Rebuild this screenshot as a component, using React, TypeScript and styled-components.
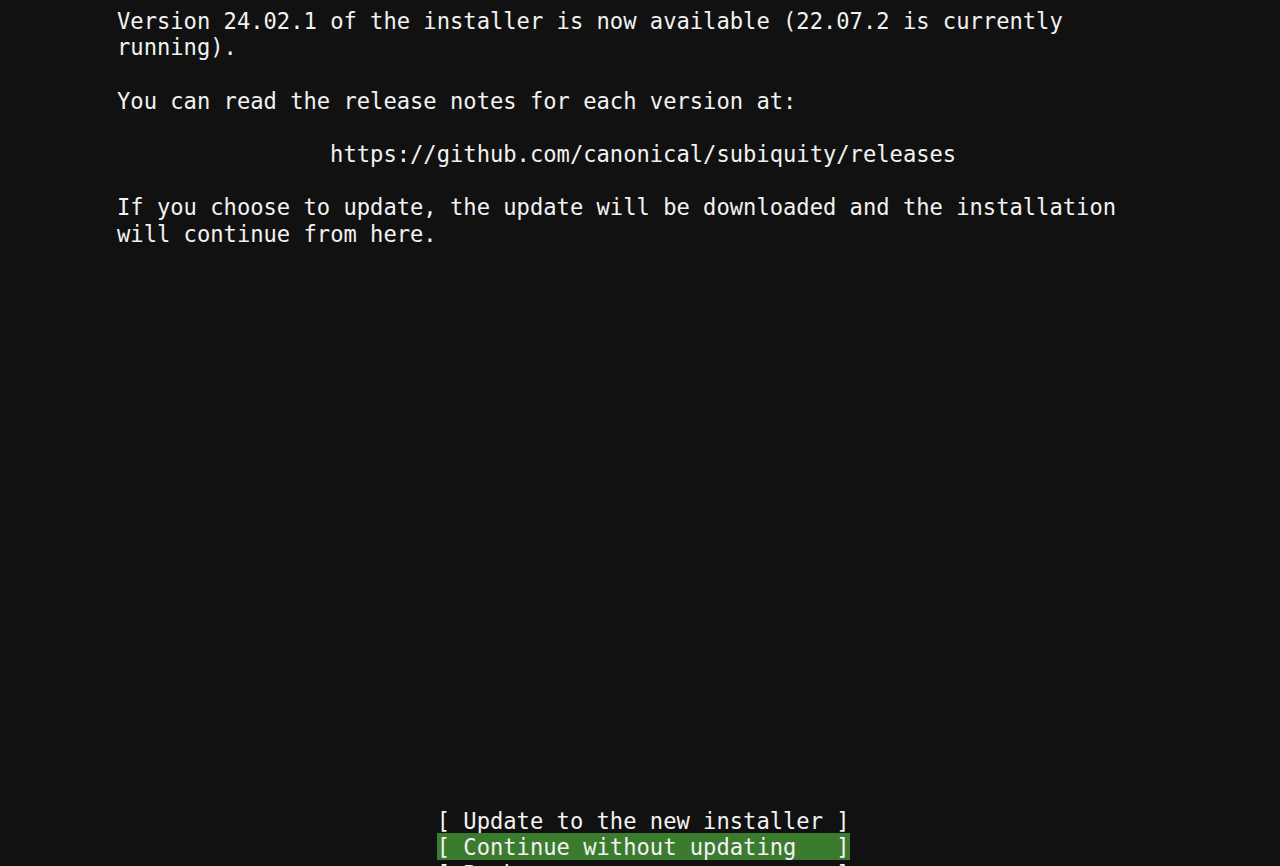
import React from "react";
import styled, { createGlobalStyle } from "styled-components";

const CELL_H = 26.667;

const GlobalStyle = createGlobalStyle`
  html, body {
    margin: 0;
    padding: 0;
    background: #111111;
  }
`;

const Screen = styled.div`
  background: #111111;
  color: #f2f2f2;
  font-family: "DejaVu Sans Mono", "Liberation Mono", monospace;
  font-size: 22.146px;
  line-height: ${CELL_H}px;
  height: 866px;
  width: 1280px;
  overflow: hidden;
  box-sizing: border-box;
  padding: 6.667px 0 0 117px;
`;

const TextArea = styled.div`
  width: 79ch;
  display: flex;
  flex-direction: column;
`;

const Line = styled.div<{ $center?: boolean }>`
  white-space: pre;
  height: ${CELL_H}px;
  box-sizing: border-box;
  padding-top: 1px;
  text-align: ${(p) => (p.$center ? "center" : "left")};
`;

const ButtonList = styled.div`
  margin-top: ${CELL_H * 21}px;
  display: flex;
  flex-direction: column;
  align-items: center;
`;

const MenuButton = styled.div<{ $selected?: boolean }>`
  white-space: pre;
  height: ${CELL_H}px;
  box-sizing: border-box;
  padding-top: 1px;
  width: 31ch;
  background: ${(p) => (p.$selected ? "#3b7b2e" : "transparent")};
`;

const lines: { text: string; center?: boolean }[] = [
  { text: "Version 24.02.1 of the installer is now available (22.07.2 is currently" },
  { text: "running)." },
  { text: "" },
  { text: "You can read the release notes for each version at:" },
  { text: "" },
  { text: "https://github.com/canonical/subiquity/releases", center: true },
  { text: "" },
  { text: "If you choose to update, the update will be downloaded and the installation" },
  { text: "will continue from here." },
];

const buttons = [
  { label: "[ Update to the new installer ]" },
  { label: "[ Continue without updating   ]", selected: true },
  { label: "[ Back                        ]" },
];

export default function App() {
  return (
    <>
      <GlobalStyle />
      <Screen>
        <TextArea>
          {lines.map((l, i) => (
            <Line key={i} $center={l.center}>
              {l.text}
            </Line>
          ))}
          <ButtonList>
            {buttons.map((b) => (
              <MenuButton key={b.label} $selected={b.selected}>
                {b.label}
              </MenuButton>
            ))}
          </ButtonList>
        </TextArea>
      </Screen>
    </>
  );
}
